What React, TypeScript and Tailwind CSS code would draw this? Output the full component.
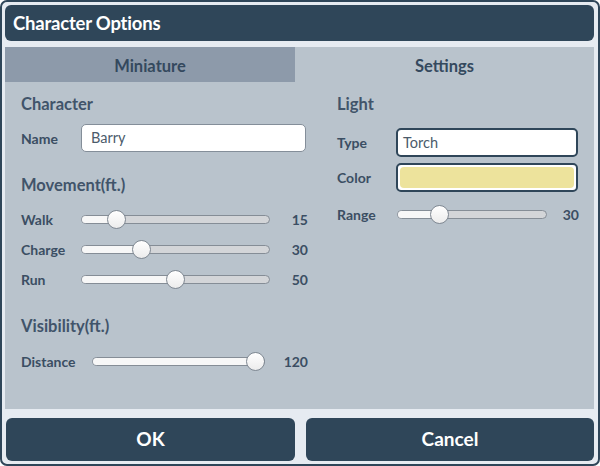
import React from 'react';

const font = { fontFamily: 'Lato, "Noto Sans", sans-serif' };

interface SliderProps {
  value: number;
  max: number;
  trackClass: string;
}

function Slider({ value, max, trackClass }: SliderProps) {
  const pct = (value / max) * 100;
  return (
    <div className={`relative h-[20px] flex items-center ${trackClass}`}>
      <div className="relative w-full h-[9px] rounded-full border border-[#858d96] bg-[#d3d5d8] overflow-hidden">
        <div className="h-full bg-[#f7f7f7]" style={{ width: `${pct}%` }} />
      </div>
      <div
        className="absolute top-[1px] h-[19px] w-[19px] rounded-full border border-[#7f8892] bg-gradient-to-b from-white to-[#ececec]"
        style={{ left: `calc((100% - 19px) * ${value / max})` }}
      />
    </div>
  );
}

function SliderRow({ label, value, max, labelW, valueW, trackW }: { label: string; value: number; max: number; labelW: string; valueW: string; trackW: string }) {
  return (
    <div className="flex items-center h-[20px]">
      <span className={`${labelW} text-[14px] font-bold text-[#3b4e63]`}>{label}</span>
      <Slider value={value} max={max} trackClass={trackW} />
      <span className={`${valueW} text-right text-[14px] font-bold text-[#3b4e63]`}>{value}</span>
    </div>
  );
}

export default function App() {
  return (
    <div style={font} className="w-[600px] h-[466px] border-2 border-[#2f4659] rounded-[7px] bg-[#e6ebf1] pl-[3px] pr-[4px] pt-[3px] pb-[3px] flex flex-col">
      {/* Título */}
      <div className="h-[36px] rounded-[6px] bg-[#2f4659] flex items-center px-[8px] pt-[2px]">
        <span className="text-white font-bold text-[18.5px] tracking-[-0.2px]">Character Options</span>
      </div>

      {/* Pestañas */}
      <div className="mt-[6px] h-[35px] flex">
        <div className="w-[290px] bg-[#8d9aaa] flex items-center justify-center pt-[3px] text-[16.5px] font-bold text-[#34495e]">
          Miniature
        </div>
        <div className="flex-1 bg-[#b9c3cc] flex items-center justify-center pt-[3px] text-[16.5px] font-bold text-[#34495e]">
          Settings
        </div>
      </div>

      {/* Contenido */}
      <div className="flex-1 bg-[#b9c3cc] flex pl-[16px]">
        <div className="w-[287px] flex flex-col pt-[12px]">
          <div className="h-[20px] flex items-center text-[16.5px] font-bold text-[#41546a]">Character</div>
          <div className="mt-[10px] flex items-center h-[28px]">
            <span className="w-[60px] text-[14px] font-bold text-[#3b4e63]">Name</span>
            <div className="w-[225px] h-[28px] rounded-[5px] bg-white border border-[#848e99] flex items-center px-[9px] text-[14.5px] text-[#4b5b6b]">
              Barry
            </div>
          </div>
          <div className="mt-[23px] h-[20px] flex items-center text-[16.5px] font-bold text-[#41546a]">Movement(ft.)</div>
          <div className="mt-[14px]">
            <SliderRow label="Walk" value={15} max={100} labelW="w-[60px]" trackW="w-[189px]" valueW="w-[38px]" />
          </div>
          <div className="mt-[10px]">
            <SliderRow label="Charge" value={30} max={100} labelW="w-[60px]" trackW="w-[189px]" valueW="w-[38px]" />
          </div>
          <div className="mt-[10px]">
            <SliderRow label="Run" value={50} max={100} labelW="w-[60px]" trackW="w-[189px]" valueW="w-[38px]" />
          </div>
          <div className="mt-[27px] h-[20px] flex items-center text-[16.5px] font-bold text-[#41546a]">Visibility(ft.)</div>
          <div className="mt-[15px]">
            <SliderRow label="Distance" value={120} max={120} labelW="w-[71px]" trackW="w-[173px]" valueW="w-[43px]" />
          </div>
        </div>

        <div className="ml-[29px] w-[242px] flex flex-col pt-[12px]">
          <div className="h-[20px] flex items-center text-[16.5px] font-bold text-[#41546a]">Light</div>
          <div className="mt-[14px] flex items-center h-[29px]">
            <span className="w-[59px] text-[14px] font-bold text-[#3b4e63]">Type</span>
            <div className="w-[182px] h-[29px] rounded-[5px] bg-white border-2 border-[#2f4659] flex items-center px-[5px] text-[14.5px] text-[#4b5b6b]">
              Torch
            </div>
          </div>
          <div className="mt-[6px] flex items-center h-[29px]">
            <span className="w-[59px] text-[14px] font-bold text-[#3b4e63]">Color</span>
            <div className="w-[182px] h-[29px] rounded-[5px] bg-white border-2 border-[#2f4659] p-[2px]">
              <div className="w-full h-full rounded-[4px] bg-[#ede39c]" />
            </div>
          </div>
          <div className="mt-[12px]">
            <SliderRow label="Range" value={30} max={120} labelW="w-[60px]" trackW="w-[150px]" valueW="w-[32px]" />
          </div>
        </div>
      </div>

      {/* Botones */}
      <div className="mt-[9px] h-[43px] flex gap-[11px] pl-[1px]">
        <button className="w-[289px] h-full rounded-[6px] bg-[#2f4659] text-white font-bold text-[19px]">OK</button>
        <button className="flex-1 h-full rounded-[6px] bg-[#2f4659] text-white font-bold text-[19px]">Cancel</button>
      </div>
    </div>
  );
}
